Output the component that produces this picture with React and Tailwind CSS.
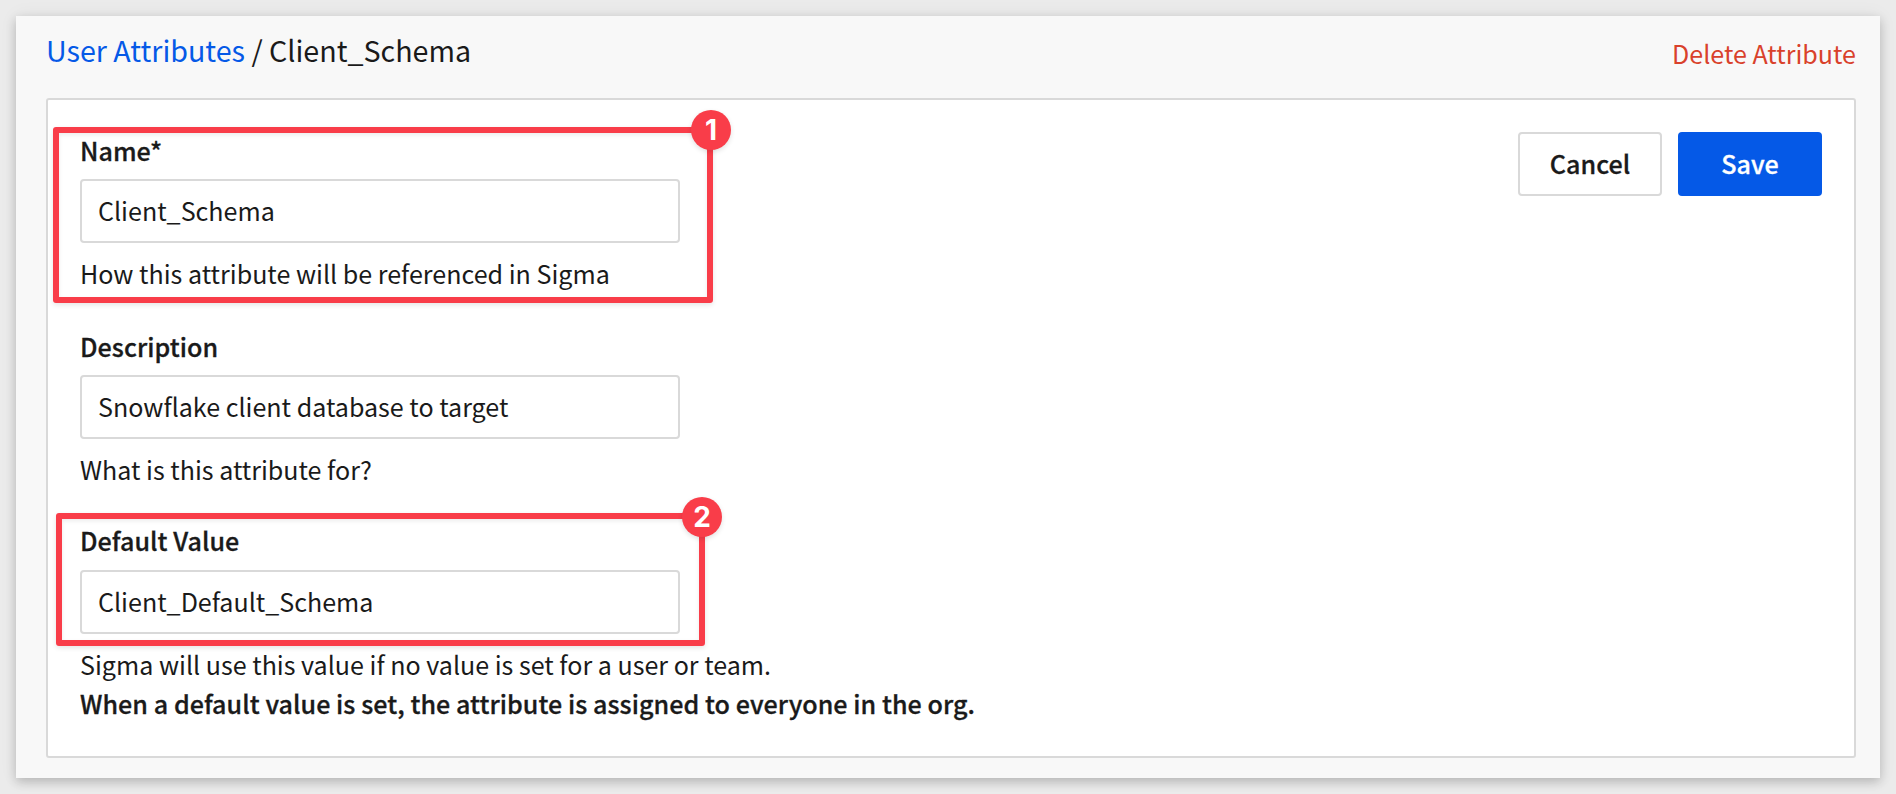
const FONT = "font-['Noto_Sans_CJK_SC',sans-serif]";
const STRONG = "font-medium tracking-[0.06px] [-webkit-text-stroke:0.3px_currentColor]";

function Marker({ n, className, badge }) {
  return (
    <div className={`pointer-events-none absolute rounded-[3px] border-[6px] border-[#f93d49] shadow-[0_2px_5px_rgba(0,0,0,0.1),inset_0_2px_4px_rgba(0,0,0,0.08)] ${className}`}>
      <span className={`absolute flex size-10 items-center justify-center rounded-full bg-[#f93d49] font-['Inter',sans-serif] text-[28px] leading-none font-bold text-white shadow-[0_2px_5px_rgba(0,0,0,0.12)] ${badge}`}>
        {n}
      </span>
    </div>
  );
}

function Field({ label, gap, value, children }) {
  return (
    <div>
      <label className={`block h-9 leading-9 whitespace-nowrap ${STRONG}`}>{label}</label>
      <div className={`flex h-16 w-[600px] items-center rounded-[4px] border-2 border-[#d9d9d9] bg-white pb-0.5 pl-4 ${gap}`}>
        <span className="whitespace-nowrap">{value}</span>
      </div>
      {children}
    </div>
  );
}

export default function App() {
  return (
    <div className={`h-[794px] w-[1896px] overflow-hidden bg-[#ebebeb] p-4 text-[25.07px] leading-9 text-[#1a1a1a] ${FONT}`}>
      <main className="relative h-[762px] bg-[#f8f8f8] pr-6 pl-[30px] shadow-[0_4px_10px_rgba(0,0,0,0.2),0_0_18px_rgba(0,0,0,0.06)]">
        <header className="flex h-[82px] items-start justify-between">
          <h1 className="flex pt-3.5 text-[28.65px] leading-10 whitespace-pre">
            <a className="text-[#0559e7]">User Attributes</a>
            <span> / </span>
            <span>Client_Schema</span>
          </h1>
          <a className="pt-[19px] text-[#d9412b]">Delete Attribute</a>
        </header>
        <section className="flex h-[660px] justify-between rounded-[3px] border-2 border-[#d9d9d9] bg-white pr-8 pl-8">
          <div className="flex flex-col pt-8">
            <div className="h-[196px]">
              <Field label="Name*" gap="mt-[11px]" value="Client_Schema">
                <p className="mt-3 whitespace-nowrap">How this attribute will be referenced in Sigma</p>
              </Field>
            </div>
            <div className="h-[194px]">
              <Field label="Description" gap="mt-[11px]" value="Snowflake client database to target">
                <p className="mt-3 whitespace-nowrap">What is this attribute for?</p>
              </Field>
            </div>
            <Field label="Default Value" gap="mt-3" value="Client_Default_Schema">
              <p className="mt-3 whitespace-nowrap">Sigma will use this value if no value is set for a user or team.</p>
              <p className={`mt-[3px] whitespace-nowrap ${STRONG}`}>When a default value is set, the attribute is assigned to everyone in the org.</p>
            </Field>
          </div>
          <div className="flex gap-4 pt-8">
            <button className={`h-16 w-36 rounded-[4px] border-2 border-[#d9d9d9] bg-white pb-0.5 ${STRONG}`}>Cancel</button>
            <button className={`h-16 w-36 rounded-[4px] bg-[#0559e7] pb-0.5 text-white ${STRONG}`}>Save</button>
          </div>
        </section>
        <Marker n="1" className="top-[111px] left-[37px] h-[176px] w-[660px]" badge="-top-[23px] right-[-24px]" />
        <Marker n="2" className="top-[497px] left-[40px] h-[133px] w-[649px]" badge="-top-[22px] right-[-23px]" />
      </main>
    </div>
  );
}
